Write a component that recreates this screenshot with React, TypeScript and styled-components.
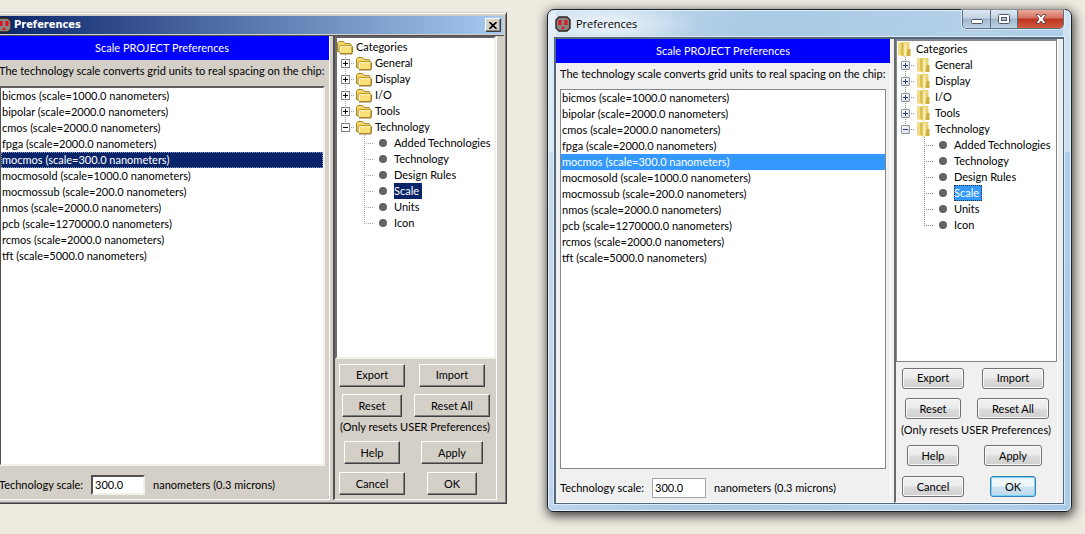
import React, { useState } from "react";
import styled, { createGlobalStyle, css, DefaultTheme, ThemeProvider } from "styled-components";

declare module "styled-components" {
  export interface DefaultTheme {
    kind: "classic" | "aero";
    face: string;
    accent: string;
    guide: string;
  }
}

const classic: DefaultTheme = { kind: "classic", face: "#d4d0c8", accent: "#0a246a", guide: "#a0a0a0" };
const aero: DefaultTheme = { kind: "aero", face: "#f0f0f0", accent: "#3399ff", guide: "#8c8c8c" };

const GlobalStyle = createGlobalStyle`
  * { box-sizing: border-box; }
  body {
    margin: 0;
    background: #edeae0;
    color: #000;
    font: 11px/16px Lato, sans-serif;
  }
  button, input { font: inherit; color: inherit; }
  ul { margin: 0; padding: 0; list-style: none; }
`;

const Desktop = styled.main`
  height: 100vh;
  overflow: hidden;
  padding: 9px 13px 0 0;
`;

const Windows = styled.div`
  display: grid;
  grid-template-columns: minmax(0, 507fr) minmax(0, 525fr);
  gap: 40px;
  align-items: start;
`;

const classicFrame = css`
  margin: 3px 0 0 -8px;
  padding: 2px 2px 3px;
  border: 1px solid;
  border-color: #d4d0c8 #404040 #404040 #d4d0c8;
  box-shadow: inset 1px 1px #fff, inset -1px -1px #808080;
  background: #d4d0c8;
`;

const aeroFrame = css`
  padding: 0 7px 7px 6px;
  border: 1px solid #17222d;
  border-radius: 7px 7px 6px 6px;
  box-shadow: inset 0 0 0 1px #e4f1fb, 1px 3px 11px 1px rgba(0, 0, 0, 0.75);
  background:
    radial-gradient(ellipse 90px 24px at 60px 14px, rgba(255, 255, 255, 0.75), transparent),
    linear-gradient(to bottom, rgba(255, 255, 255, 0.4) 0 142px, transparent 142px) left / 8px 100% no-repeat,
    linear-gradient(to bottom, rgba(255, 255, 255, 0.4) 0 142px, transparent 142px) right / 8px 100% no-repeat,
    linear-gradient(100deg, #c9deef 0, #a9c9e4 35%, #b4d0e9 70%, #a9cbe8 100%);
`;

const Frame = styled.section`
  ${({ theme }) => (theme.kind === "classic" ? classicFrame : aeroFrame)}
`;

const TitleBar = styled.header`
  display: flex;
  align-items: center;
  ${({ theme }) =>
    theme.kind === "classic"
      ? css`
          height: 18px;
          margin: 1px 1px 1px;
          padding: 0 2px 0 0;
          gap: 2px;
          color: #fff;
          background: linear-gradient(to right, #0a246a, #a6caf0);
        `
      : css`
          height: 27px;
          padding-left: 1px;
          gap: 5px;
        `}
`;

const Title = styled.h1`
  flex: 1;
  margin: 0;
  ${({ theme }) =>
    theme.kind === "classic"
      ? css`
          font-family: "DejaVu Sans Condensed", "DejaVu Sans", sans-serif;
          font-size: 11px;
          font-weight: bold;
        `
      : css`
          font-family: "Open Sans", sans-serif;
          font-size: 11px;
          font-weight: normal;
        `}
`;

const ClassicClose = styled.button`
  display: grid;
  place-items: center;
  width: 16px;
  height: 14px;
  padding: 0;
  border: 1px solid;
  border-color: #fff #404040 #404040 #fff;
  box-shadow: inset -1px -1px #808080;
  background: #d4d0c8;
  color: #000;
`;

const CaptionButtons = styled.div`
  display: flex;
  align-self: flex-start;
  overflow: hidden;
  border: 1px solid #5b6f83;
  border-top: 0;
  border-radius: 0 0 5px 5px;
  box-shadow: 0 0 0 1px rgba(255, 255, 255, 0.5);
`;

const CaptionButton = styled.button<{ $close?: boolean }>`
  display: grid;
  place-items: center;
  width: ${({ $close }) => ($close ? 46 : 27)}px;
  height: 18px;
  padding: 0;
  border: 0;
  border-left: 1px solid #5b6f83;
  background: ${({ $close }) =>
    $close
      ? "linear-gradient(#e9a99c 0, #d4705f 45%, #bc3320 50%, #d35a3e 100%)"
      : "linear-gradient(#dde8f2 0, #c3d3e2 45%, #9fb5c9 50%, #bfd3e5 100%)"};
  &:first-child { border-left: 0; }
`;

const Client = styled.div`
  display: grid;
  grid-template-columns: minmax(0, 1fr) 164px;
  column-gap: 3px;
  background: ${({ theme }) => theme.face};
  ${({ theme }) =>
    theme.kind === "classic"
      ? css`
          padding-right: 7px;
          border-top: 1px solid #505050;
        `
      : css`
          padding-right: 5px;
          border: 1px solid #55677e;
          border-width: 2px 1px 1px 2px;
          box-shadow: 0 0 0 1px #dcebf7;
        `}
`;

const Editor = styled.div`
  display: flex;
  flex-direction: column;
  border-right: 1px solid #fff;
  border-bottom: 1px solid #fff;
`;

const Banner = styled.h2`
  margin: 0;
  background: #00f;
  color: #fff;
  font-size: 11px;
  font-weight: normal;
  line-height: 24px;
  text-align: center;
`;

const Message = styled.p`
  margin: 0;
  padding: 3px 4px 7px;
  white-space: nowrap;
`;

const ScaleList = styled.ul`
  flex: 1;
  margin: 0 4px;
  background: #fff;
  cursor: default;
  ${({ theme }) =>
    theme.kind === "classic"
      ? css`
          border: 2px solid;
          border-color: #606060 #f2f0ea #f2f0ea #505050;
        `
      : css`
          border: 1px solid #828790;
        `}
`;

const ScaleOption = styled.li<{ $selected: boolean }>`
  padding: 0 1px;
  ${({ $selected, theme }) =>
    $selected &&
    css`
      background: ${theme.accent};
      color: #fff;
      ${theme.kind === "classic" && "outline: 1px dotted #8a97bd; outline-offset: -1px;"}
    `}
`;

const FieldRow = styled.div`
  display: flex;
  align-items: center;
  height: 33px;
  padding: 4px 4px 0;
`;

const ScaleInput = styled.input`
  width: 54px;
  height: 20px;
  margin: 0 8px;
  padding: 0 2px;
  background: #fff;
  ${({ theme }) =>
    theme.kind === "classic"
      ? css`
          border: 2px solid;
          border-color: #505050 #f2f0ea #f2f0ea #505050;
        `
      : css`
          border: 1px solid #a0a5ad;
        `}
`;

const Side = styled.aside`
  display: flex;
  flex-direction: column;
  border-left: 2px solid #505050;
  border-right: 1px solid #fff;
  border-bottom: 1px solid #fff;
  ${({ theme }) => theme.kind === "aero" && "border-left-color: #696969;"}
`;

const Tree = styled.ul`
  min-height: 323px;
  background: #fff;
  cursor: default;
  ${({ theme }) =>
    theme.kind === "classic"
      ? css`
          padding-top: 1px;
          border: 2px solid;
          border-color: #606060 #f2f0ea #f2f0ea #707070;
        `
      : css`
          border: 1px solid #828790;
          border-top-width: 2px;
        `}
`;

const Node = styled.li<{ $indent?: boolean }>`
  display: flex;
  align-items: center;
  gap: 3px;
  height: 16px;
  padding-left: ${({ $indent }) => ($indent ? 19 : 0)}px;
`;

const Guide = styled.span<{ $last?: boolean }>`
  display: flex;
  flex: none;
  align-items: center;
  width: 19px;
  height: 16px;
  margin-right: -3px;
  padding-left: 4px;
  background:
    repeating-linear-gradient(to bottom, ${({ theme }) => theme.guide} 0 1px, transparent 1px 2px) 8px 0 / 1px
      ${({ $last }) => ($last ? "9px" : "16px")} no-repeat,
    repeating-linear-gradient(to right, ${({ theme }) => theme.guide} 0 1px, transparent 1px 2px) 8px 8px / 10px 1px
      no-repeat;
`;

const Toggle = styled.button`
  display: grid;
  place-items: center;
  width: 9px;
  height: 9px;
  padding: 0;
  border: 1px solid #808080;
  background: #fff;
  color: #000;
  ${({ theme }) =>
    theme.kind === "aero" &&
    css`
      border-color: #8a94a3;
      border-radius: 1px;
      background: linear-gradient(135deg, #fff, #d8dce2);
      color: #27408b;
    `}
`;

const Bullet = styled.span`
  flex: none;
  width: 8px;
  height: 8px;
  margin: 0 4px;
  border-radius: 4px;
  background: #636363;
`;

const Label = styled.span<{ $selected?: boolean }>`
  padding-right: 3px;
  white-space: nowrap;
  ${({ $selected, theme }) =>
    $selected &&
    css`
      background: ${theme.accent};
      color: #fff;
      outline: 1px dotted ${theme.kind === "aero" ? "#333" : theme.accent};
      outline-offset: -1px;
    `}
`;

const Actions = styled.div`
  display: grid;
  grid-template-columns: 74px 86px;
  grid-template-rows: 32px 29px 17px 31px 31px;
  place-items: center;
`;

const Note = styled.p`
  grid-column: 1 / -1;
  align-self: start;
  margin: 0;
  line-height: 14px;
  white-space: nowrap;
`;

const ActionButton = styled.button<{ $primary?: boolean }>`
  ${({ theme, $primary }) =>
    theme.kind === "classic"
      ? css`
          height: 23px;
          padding: 0 16px;
          border: 1px solid;
          border-color: #fff #404040 #404040 #fff;
          box-shadow: inset -1px -1px #808080;
          background: #d4d0c8;
        `
      : css`
          height: 21px;
          padding: 0 14px;
          border: 1px solid ${$primary ? "#3c7fb1" : "#707070"};
          border-radius: 3px;
          box-shadow: inset 0 0 0 1px ${$primary ? "#6fd3f5" : "#fafafa"};
          background: ${$primary
            ? "linear-gradient(#eef6fb 0 48%, #cfe3f0 52%, #bdd9ea)"
            : "linear-gradient(#f2f2f2 0, #ebebeb 48%, #dddddd 52%, #cfcfcf)"};
        `}
`;

const NextLine = styled.svg`
  display: block;
  margin: 22px 0 0 40px;
`;

const OutletIcon = () => (
  <svg width="16" height="16" viewBox="0 0 16 16" aria-hidden="true">
    <path d="M4 1h8l3 3v8l-3 3H4l-3-3V4z" fill="#8b8580" stroke="#2b2523" strokeWidth="1.4" />
    <path d="M3.5 4h3v5h-3zM9.500 4h3v5h-3zM6.500 12l1.500-2 1.500 2v1h-3z" fill="#e01322" />
  </svg>
);

const ClassicFolder = () => (
  <svg width="16" height="16" viewBox="0 0 16 16" aria-hidden="true">
    <path d="M.5 12.500V4L2 2.500h4.500L8 4.500h5l1 1.500v7z" fill="#f7d968" stroke="#a8852a" />
    <path d="M3 6.500h11l1.500 1V13L14.500 14.500H3.500L2 13V8z" fill="#fbdf78" stroke="#b8952f" />
    <path d="M3.500 7.500h10.500M3.500 8v5" stroke="#fff6c4" fill="none" />
    <path d="M3 15h12v-7" fill="none" stroke="#7d6418" strokeWidth=".8" />
  </svg>
);

const AeroFolder = () => (
  <svg width="16" height="16" viewBox="0 0 16 16" aria-hidden="true">
    <path d="M1 1.500l5-.500v14l-5-.500z" fill="#efdc88" />
    <path d="M4 2l4-1v15l-4-2z" fill="#dcbf4c" />
    <path d="M6.500 1h6v14h-6z" fill="#ead576" />
    <path d="M7.500 2.500h2V15H7z" fill="#f8eeb6" />
    <path d="M10.500 8H13.500v7h-4z" fill="#cfae3c" />
  </svg>
);

const ToggleSign = ({ open }: { open: boolean }) => (
  <svg width="5" height="5" viewBox="0 0 5 5" aria-hidden="true">
    <path d={open ? "M0 2h5v1H0z" : "M0 2h5v1H0zM2 0h1v5H2z"} fill="currentColor" />
  </svg>
);

const scales: [string, string][] = [
  ["bicmos", "1000.0"],
  ["bipolar", "2000.0"],
  ["cmos", "2000.0"],
  ["fpga", "2000.0"],
  ["mocmos", "300.0"],
  ["mocmosold", "1000.0"],
  ["mocmossub", "200.0"],
  ["nmos", "2000.0"],
  ["pcb", "1270000.0"],
  ["rcmos", "2000.0"],
  ["tft", "5000.0"],
];
const groups = ["General", "Display", "I/O", "Tools", "Technology"];
const pages = ["Added Technologies", "Technology", "Design Rules", "Scale", "Units", "Icon"];

function CategoryTree({ kind }: { kind: DefaultTheme["kind"] }) {
  const [open, setOpen] = useState(true);
  const [page, setPage] = useState("Scale");
  const Folder = kind === "classic" ? ClassicFolder : AeroFolder;
  return (
    <Tree role="tree" aria-label="Categories">
      <Node role="treeitem">
        <Folder />
        <Label>Categories</Label>
      </Node>
      {groups.map((name) => {
        const last = name === "Technology";
        const expanded = last && open;
        return (
          <Node key={name} role="treeitem" aria-expanded={expanded}>
            <Guide $last={last}>
              <Toggle
                type="button"
                aria-label={`${expanded ? "Collapse" : "Expand"} ${name}`}
                onClick={() => last && setOpen(!open)}
              >
                <ToggleSign open={expanded} />
              </Toggle>
            </Guide>
            <Folder />
            <Label>{name}</Label>
          </Node>
        );
      })}
      {open &&
        pages.map((name) => (
          <Node key={name} $indent role="treeitem" aria-selected={name === page} onClick={() => setPage(name)}>
            <Guide $last={name === "Icon"} />
            <Bullet />
            <Label $selected={name === page}>{name}</Label>
          </Node>
        ))}
    </Tree>
  );
}

function PreferencesWindow({ theme }: { theme: DefaultTheme }) {
  const [selected, setSelected] = useState("mocmos");
  const fieldId = `scale-${theme.kind}`;
  return (
    <ThemeProvider theme={theme}>
      <Frame>
        <TitleBar>
          <OutletIcon />
          <Title>Preferences</Title>
          {theme.kind === "classic" ? (
            <ClassicClose type="button" aria-label="Close">
              <svg width="8" height="7" viewBox="0 0 8 7" aria-hidden="true">
                <path d="M.5 0l7 7M7.500 0l-7 7" stroke="currentColor" strokeWidth="1.6" />
              </svg>
            </ClassicClose>
          ) : (
            <CaptionButtons>
              <CaptionButton type="button" aria-label="Minimize">
                <svg width="12" height="12" viewBox="0 0 12 12" aria-hidden="true">
                  <rect x=".5" y="6.500" width="11" height="4" rx="1" fill="#fff" stroke="#4d5966" />
                </svg>
              </CaptionButton>
              <CaptionButton type="button" aria-label="Maximize">
                <svg width="12" height="10" viewBox="0 0 12 10" aria-hidden="true">
                  <rect x=".5" y=".5" width="11" height="9" rx="1" fill="#fff" stroke="#4d5966" />
                  <rect x="3.500" y="3.500" width="5" height="3" fill="#b7c6d4" stroke="#4d5966" />
                </svg>
              </CaptionButton>
              <CaptionButton type="button" aria-label="Close" $close>
                <svg width="12" height="10" viewBox="0 0 12 10" aria-hidden="true">
                  <path
                    d="M1 .5h3L6 3 8 .5h3L8 5l3 4.500H8L6 7 4 9.500H1L4 5z"
                    fill="#fff"
                    stroke="#5c3a3c"
                    strokeWidth=".8"
                  />
                </svg>
              </CaptionButton>
            </CaptionButtons>
          )}
        </TitleBar>
        <Client>
          <Editor>
            <Banner>Scale PROJECT Preferences</Banner>
            <Message>The technology scale converts grid units to real spacing on the chip:</Message>
            <ScaleList role="listbox" aria-label="Technologies">
              {scales.map(([name, value]) => (
                <ScaleOption
                  key={name}
                  role="option"
                  aria-selected={name === selected}
                  $selected={name === selected}
                  onClick={() => setSelected(name)}
                >
                  {name} (scale={value} nanometers)
                </ScaleOption>
              ))}
            </ScaleList>
            <FieldRow>
              <label htmlFor={fieldId}>Technology scale:</label>
              <ScaleInput id={fieldId} defaultValue="300.0" />
              <span>nanometers (0.3 microns)</span>
            </FieldRow>
          </Editor>
          <Side>
            <CategoryTree kind={theme.kind} />
            <Actions>
              <ActionButton type="button">Export</ActionButton>
              <ActionButton type="button">Import</ActionButton>
              <ActionButton type="button">Reset</ActionButton>
              <ActionButton type="button">Reset All</ActionButton>
              <Note>(Only resets USER Preferences)</Note>
              <ActionButton type="button">Help</ActionButton>
              <ActionButton type="button">Apply</ActionButton>
              <ActionButton type="button">Cancel</ActionButton>
              <ActionButton type="button" $primary>
                OK
              </ActionButton>
            </Actions>
          </Side>
        </Client>
      </Frame>
    </ThemeProvider>
  );
}

export default function App() {
  return (
    <>
      <GlobalStyle />
      <Desktop>
        <Windows>
          <PreferencesWindow theme={classic} />
          <PreferencesWindow theme={aero} />
        </Windows>
        <NextLine width="66" height="2" viewBox="0 0 66 2" aria-hidden="true">
          <path d="M0 0h5v2H0zM10 0h1v2h-1zM16 0h1v2h-1zM63 0h2v2h-2z" fill="#111" />
        </NextLine>
      </Desktop>
    </>
  );
}
